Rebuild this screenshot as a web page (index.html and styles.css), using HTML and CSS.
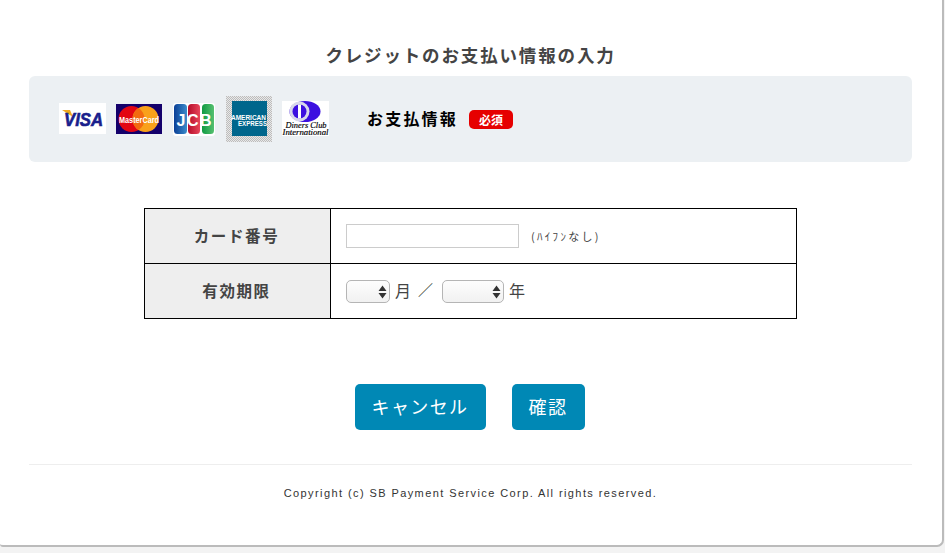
FILE: index.html
```html
<!DOCTYPE html>
<html lang="ja">
<head>
<meta charset="utf-8">
<title>クレジットのお支払い情報の入力</title>
<link rel="stylesheet" href="styles.css">
</head>
<body>
<div class="page">
  <h1 class="title">クレジットのお支払い情報の入力</h1>
  <section class="panel">
    <div class="logos">
      <svg class="logo visa" width="47" height="31" viewBox="0 0 47 31">
        <rect width="47" height="31" fill="#fff"/>
        <path d="M3 7h8l3 7z" fill="#f0a81e"/>
        <text x="24.500" y="23" class="visa-text" text-anchor="middle" textLength="39" lengthAdjust="spacingAndGlyphs">VISA</text>
      </svg>
      <svg class="logo mc" width="46" height="30" viewBox="0 0 46 30">
        <rect width="46" height="30" fill="#14006b"/>
        <circle cx="15.500" cy="15" r="13" fill="#e30613"/>
        <circle cx="29.500" cy="15" r="13" fill="#f9a11b"/>
        <path d="M22.500 4a13 13 0 0 1 0 22a13 13 0 0 1 0-22z" fill="#f26a10"/>
        <text x="23" y="18.500" class="mc-text" text-anchor="middle" textLength="40" lengthAdjust="spacingAndGlyphs">MasterCard</text>
      </svg>
      <svg class="logo jcb" width="42" height="33" viewBox="0 0 42 33">
        <defs>
          <linearGradient id="jcb-b"><stop offset="0" stop-color="#0a3f96"/><stop offset="1" stop-color="#3b8ccb"/></linearGradient>
          <linearGradient id="jcb-r"><stop offset="0" stop-color="#b50d2a"/><stop offset="1" stop-color="#e8455a"/></linearGradient>
          <linearGradient id="jcb-g"><stop offset="0" stop-color="#0f9a42"/><stop offset="1" stop-color="#56c070"/></linearGradient>
        </defs>
        <rect width="42" height="33" rx="3" fill="#fff"/>
        <rect x="1" y="1" width="13" height="30" rx="3.500" fill="url(#jcb-b)"/>
        <rect x="15" y="1" width="12" height="30" rx="3.500" fill="url(#jcb-r)"/>
        <rect x="29" y="1" width="12" height="30" rx="3.500" fill="url(#jcb-g)"/>
        <text x="21" y="22.500" class="jcb-text" text-anchor="middle" textLength="35" lengthAdjust="spacing">JCB</text>
      </svg>
      <svg class="logo amex" width="46" height="46" viewBox="0 0 46 46">
        <defs>
          <pattern id="dither" width="2" height="2" patternUnits="userSpaceOnUse">
            <rect width="2" height="2" fill="#e8e8e8"/>
            <rect width="1" height="1" fill="#bcbcbc"/>
            <rect x="1" y="1" width="1" height="1" fill="#bcbcbc"/>
          </pattern>
        </defs>
        <rect width="46" height="46" fill="url(#dither)"/>
        <rect x="6" y="5" width="35" height="35" fill="#00668c"/>
        <text x="5" y="23.500" class="amex-text" textLength="35" lengthAdjust="spacingAndGlyphs">AMERICAN</text>
        <text x="12" y="30" class="amex-text" textLength="29" lengthAdjust="spacingAndGlyphs">EXPRESS</text>
      </svg>
      <svg class="logo diners" width="47" height="35" viewBox="0 0 47 35">
        <rect width="47" height="35" fill="#fff"/>
        <ellipse cx="23" cy="10.500" rx="15.500" ry="10.500" fill="#3c10e0"/>
        <circle cx="17.500" cy="10.500" r="10" fill="#d8d8ea"/>
        <circle cx="17.500" cy="10.500" r="7" fill="#3c10e0"/>
        <rect x="16" y="3.500" width="3" height="14" fill="#fff"/>
        <text x="24" y="27" class="diners-text" text-anchor="middle" textLength="41" lengthAdjust="spacingAndGlyphs">Diners Club</text>
        <text x="23.500" y="34" class="diners-text" text-anchor="middle" textLength="46" lengthAdjust="spacingAndGlyphs">International</text>
      </svg>
    </div>
    <h2 class="panel-label">お支払情報</h2>
    <span class="badge">必須</span>
  </section>

  <table class="form-table">
    <tr>
      <th>カード番号</th>
      <td>
        <div class="field">
          <input class="card-input" type="text" aria-label="カード番号">
          <span class="hint">(ﾊｲﾌﾝなし)</span>
        </div>
      </td>
    </tr>
    <tr>
      <th>有効期限</th>
      <td>
        <div class="field expiry">
          <span class="select-wrap month">
            <select aria-label="月"><option></option></select>
            <svg class="arrows" width="9" height="14" viewBox="0 0 9 14"><path d="M4.500 0.500 8.500 6H0.500zM0.500 8H8.500L4.500 13.500z" fill="#333"/></svg>
          </span>
          <span class="unit">月</span>
          <span class="slash">／</span>
          <span class="select-wrap year">
            <select aria-label="年"><option></option></select>
            <svg class="arrows" width="9" height="14" viewBox="0 0 9 14"><path d="M4.500 0.500 8.500 6H0.500zM0.500 8H8.500L4.500 13.500z" fill="#333"/></svg>
          </span>
          <span class="unit">年</span>
        </div>
      </td>
    </tr>
  </table>

  <div class="actions">
    <button class="btn btn-cancel" type="button">キャンセル</button>
    <button class="btn btn-confirm" type="button">確認</button>
  </div>

  <footer class="footer">Copyright (c) SB Payment Service Corp. All rights reserved.</footer>
</div>
</body>
</html>
```
FILE: styles.css
```css
* { box-sizing: border-box; }
html, body { margin: 0; padding: 0; height: 553px; overflow: hidden; }
body {
  background: #f3f3f3;
  font-family: "Noto Sans CJK JP", "Liberation Sans", sans-serif;
  color: #444;
}
.page {
  width: 944px;
  height: 547px;
  padding: 0 30px 0 29px;
  background: #fff;
  border-right: 2px solid #bbb;
  border-bottom: 2px solid #bbb;
  border-bottom-right-radius: 7px;
  border-bottom-left-radius: 3px;
  display: flex;
  flex-direction: column;
}
.title {
  margin: 41px 0 0;
  height: 35px;
  line-height: 27px;
  font-size: 17.500px;
  font-weight: 700;
  letter-spacing: 1.850px;
  text-align: center;
  color: #444;
}
.panel {
  height: 86px;
  background: #ecf0f3;
  border-radius: 6px;
  padding-left: 30px;
  display: flex;
  align-items: center;
}
.logos { display: flex; align-items: center; width: 308px; flex: none; }
.logo { display: block; flex: none; }
.visa { margin: 0 10px 1px 0; }
.mc { margin: 0 11px 0 0; }
.jcb { margin: 1px 11px 0 0; }
.amex { margin: 0 10px 0 0; }
.diners { margin: 0 0 1px 0; }
.visa-text { font: italic 700 18px "Liberation Sans", sans-serif; fill: #1a1f8c; stroke: #1a1f8c; stroke-width: 0.600px; }
.mc-text { font: 700 9px "Liberation Sans", sans-serif; fill: #fff; }
.jcb-text { font: 700 16px "Liberation Sans", sans-serif; fill: #fff; }
.amex-text { font: 700 7px "Liberation Sans", sans-serif; fill: #fff; }
.diners-text { font: italic 400 7.500px "Liberation Serif", serif; fill: #000; stroke: #000; stroke-width: 0.150px; }
.panel-label {
  margin: 0 0 2px 0;
  width: 102px;
  flex: none;
  font-size: 16px;
  font-weight: 700;
  letter-spacing: 2.200px;
  line-height: 22px;
  color: #000;
}
.badge {
  width: 44px;
  height: 19px;
  border-radius: 5px;
  background: #e60000;
  color: #fff;
  font-size: 12px;
  font-weight: 700;
  line-height: 20px;
  text-align: center;
}
.form-table {
  margin: 46px 0 0 115px;
  width: 653px;
  height: 111px;
  border-collapse: collapse;
  table-layout: fixed;
}
.form-table th, .form-table td {
  border: 1px solid #000;
  height: 55px;
  padding: 0;
}
.form-table th {
  width: 186px;
  background: #eee;
  padding: 0 2px 3px 0;
  font-size: 15.500px;
  font-weight: 700;
  letter-spacing: 1.600px;
  color: #444;
  text-align: center;
}
.form-table td { padding-left: 15px; }
.field { display: flex; align-items: center; }
.card-input {
  width: 173px;
  height: 24px;
  border: 1px solid #ccc;
  background: #fff;
  padding: 0;
  margin: 0;
  border-radius: 0;
}
.hint {
  margin-left: 12px;
  font-size: 11px;
  letter-spacing: 2.300px;
  color: #444;
}
.select-wrap { position: relative; display: block; height: 23px; }
.month { width: 44px; }
.year { width: 62px; }
.select-wrap select {
  appearance: none;
  -webkit-appearance: none;
  display: block;
  width: 100%;
  height: 100%;
  margin: 0;
  padding: 0;
  border: 1px solid #b5b5b5;
  border-radius: 5px;
  background: linear-gradient(#fdfdfd, #f1f1f1);
}
.arrows { position: absolute; right: 3px; top: 5px; pointer-events: none; }
.unit { font-size: 16px; line-height: 22px; color: #444; margin: 0 0 2px 5px; }
.slash { font-size: 15px; line-height: 22px; width: 23px; margin: 0 1px 2px 7px; color: #333; }
.actions {
  margin-top: 65px;
  display: flex;
  justify-content: center;
  gap: 26px;
  padding-right: 2px;
}
.btn {
  height: 46px;
  padding: 0 0 3px;
  border: 0;
  border-radius: 5px;
  background: #0088b5;
  color: #fff;
  font-family: inherit;
  font-size: 18px;
  font-weight: 400;
  letter-spacing: 1.400px;
}
.btn-cancel { width: 131px; }
.btn-confirm { width: 73px; }
.footer {
  margin-top: 34px;
  border-top: 1px solid #eee;
  padding-top: 20px;
  font-family: "Liberation Sans", sans-serif;
  font-size: 11px;
  line-height: 16px;
  letter-spacing: 1.410px;
  color: #333;
  text-align: center;
}
```
